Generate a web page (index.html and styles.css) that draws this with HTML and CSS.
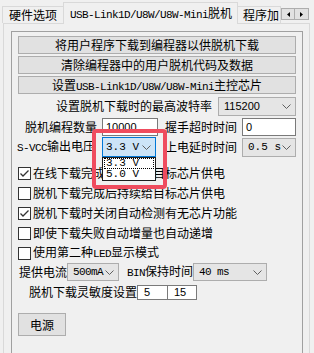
FILE: index.html
```html
<!DOCTYPE html>
<html>
<head>
<meta charset="utf-8">
<link rel="stylesheet" href="styles.css">
</head>
<body>
<div class="tabs">
  <div class="tab tab-first">硬件选项</div>
  <div class="tab tab-active"><span class="m">USB-Link1D/U8W/U8W-Mini</span>脱机</div>
  <div class="tab tab-third">程序加</div>
  <div class="arrows">
    <span class="arr"><svg width="3" height="5" viewBox="0 0 3 5"><polygon points="3,0 3,5 0,2.5" fill="#000"/></svg></span>
    <span class="arr"><svg width="3" height="5" viewBox="0 0 3 5"><polygon points="0,0 0,5 3,2.5" fill="#000"/></svg></span>
  </div>
</div>
<div class="panel">
  <div class="group">
    <div class="btn wide">将用户程序下载到编程器以供脱机下载</div>
    <div class="btn wide gap2">清除编程器中的用户脱机代码及数据</div>
    <div class="btn wide gap2">设置<span class="m">USB-Link1D/U8W/U8W-Mini</span>主控芯片</div>

    <div class="row row-baud">
      <span class="lbl w156">设置脱机下载时的最高波特率</span>
      <div class="combo c-baud"><span class="num">115200</span><svg class="chev" width="9" height="5" viewBox="0 0 9 5"><polyline points="0.5,0.5 4.5,4.5 8.5,0.5" fill="none" stroke="#5f5f5f" stroke-width="1"/></svg></div>
    </div>

    <div class="row row-count">
      <span class="lbl w72 ml7">脱机编程数量</span>
      <div class="input i-count"><span class="num">10000</span></div>
      <span class="lbl w72 ml7">握手超时时间</span>
      <div class="input i-hand"><span class="num">0</span></div>
    </div>

    <div class="row row-vcc">
      <span class="lbl w78 mln1"><span class="m">S-VCC</span>输出电压</span>
      <div class="combo c-vcc active"><span class="m sp">3.3 V</span><svg class="chev" width="9" height="5" viewBox="0 0 9 5"><polyline points="0.5,0.5 4.5,4.5 8.5,0.5" fill="none" stroke="#5f5f5f" stroke-width="1"/></svg></div>
      <span class="lbl w72 ml9">上电延时时间</span>
      <div class="combo c-delay"><span class="m sp">0.5 s</span><svg class="chev" width="9" height="5" viewBox="0 0 9 5"><polyline points="0.5,0.5 4.5,4.5 8.5,0.5" fill="none" stroke="#5f5f5f" stroke-width="1"/></svg></div>
    </div>

    <div class="checks">
      <div class="check"><span class="box"><svg width="11" height="11" viewBox="0 0 11 11"><polyline points="1.5,5.5 4,8 9.5,2.5" fill="none" stroke="#333" stroke-width="1.3"/></svg></span><span class="ctext">在线下载完成后持续给目标芯片供电</span></div>
      <div class="check"><span class="box"></span><span class="ctext">脱机下载完成后持续给目标芯片供电</span></div>
      <div class="check"><span class="box"><svg width="11" height="11" viewBox="0 0 11 11"><polyline points="1.5,5.5 4,8 9.5,2.5" fill="none" stroke="#333" stroke-width="1.3"/></svg></span><span class="ctext">脱机下载时关闭自动检测有无芯片功能</span></div>
      <div class="check"><span class="box"></span><span class="ctext">即使下载失败自动增量也自动递增</span></div>
      <div class="check"><span class="box"></span><span class="ctext">使用第二种<span class="m">LED</span>显示模式</span></div>
    </div>

    <div class="row row-cur">
      <span class="lbl w48 ml1">提供电流</span>
      <div class="combo c-cur"><span class="m">500mA</span><svg class="chev" width="9" height="5" viewBox="0 0 9 5"><polyline points="0.5,0.5 4.5,4.5 8.5,0.5" fill="none" stroke="#5f5f5f" stroke-width="1"/></svg></div>
      <span class="lbl w66 ml8"><span class="m">BIN</span>保持时间</span>
      <div class="combo c-hold"><span class="m">40 ms</span><svg class="chev" width="9" height="5" viewBox="0 0 9 5"><polyline points="0.5,0.5 4.5,4.5 8.5,0.5" fill="none" stroke="#5f5f5f" stroke-width="1"/></svg></div>
    </div>

    <div class="row row-sens">
      <span class="lbl w108 ml11">脱机下载灵敏度设置</span>
      <div class="input i-s1"><span class="num">5</span></div>
      <div class="input i-s2"><span class="num">15</span></div>
    </div>

    <div class="btn btn-power">电源</div>
  </div>
</div>

<div class="highlight"></div>
<div class="droplist">
  <div class="ditem focus"><span class="m sp">3.3 V</span></div>
  <div class="ditem"><span class="m sp">5.0 V</span></div>
</div>
</body>
</html>
```

FILE: styles.css
```css
html, body {
  margin: 0;
  padding: 0;
}
body {
  width: 314px;
  height: 353px;
  overflow: hidden;
  position: relative;
  background: #f0f0f0;
  color: #000;
  font-family: "Noto Sans CJK SC", "Noto Sans", sans-serif;
  font-size: 12px;
  line-height: 16px;
}
.m {
  font-family: "Liberation Mono", "DejaVu Sans Mono", monospace;
  font-size: 11px;
  letter-spacing: -0.6px;
}
.sp {
  letter-spacing: 0;
  font-size: 11px;
}
.num {
  font-family: "Liberation Sans", Arial, sans-serif;
  font-size: 11px;
}

/* tabs */
.tabs {
  display: flex;
  align-items: flex-end;
  height: 23px;
  padding-left: 2px;
}
.tab {
  box-sizing: border-box;
  border: 1px solid #d9d9d9;
  border-bottom: none;
  white-space: nowrap;
  overflow: hidden;
  background: #f0f0f0;
}
.tab-first {
  width: 61px;
  height: 17px;
  padding-left: 6px;
  line-height: 16px;
  border-right: none;
}
.tab-active {
  width: 175px;
  height: 22px;
  margin-bottom: -1px;
  position: relative;
  z-index: 1;
  padding-left: 6px;
  line-height: 20px;
  background: #f0f0f0;
}
.tab-third {
  width: 43px;
  height: 17px;
  padding-left: 5px;
  line-height: 16px;
  border-left: none;
}
.arrows {
  align-self: flex-start;
  margin-top: 8px;
  display: flex;
}
.arr {
  box-sizing: border-box;
  width: 14px;
  height: 12px;
  border: 1px solid #adadad;
  background: #e1e1e1;
  display: flex;
  align-items: center;
  justify-content: center;
}
.arr + .arr {
  border-left: none;
}

/* panel */
.panel {
  box-sizing: border-box;
  margin-left: 3px;
  width: 307px;
  height: 330px;
  border: 1px solid #d9d9d9;
  border-bottom: none;
  padding: 7px 0 0 7px;
}
.group {
  box-sizing: border-box;
  width: 292px;
  height: 322px;
  border: 1px solid #a0a0a0;
  border-bottom: none;
  padding: 4px 0 0 6px;
  display: flex;
  flex-direction: column;
}
.btn {
  box-sizing: border-box;
  height: 18px;
  border: 1px solid #adadad;
  background: #e1e1e1;
  text-align: center;
  line-height: 16px;
  white-space: nowrap;
}
.wide {
  width: 278px;
}
.gap2 {
  margin-top: 2px;
}

.row {
  display: flex;
  align-items: center;
  white-space: nowrap;
}
.lbl {
  display: inline-block;
  flex: none;
  white-space: nowrap;
}
.w156 { width: 156px; }
.w72 { width: 72px; }
.w78 { width: 78px; }
.w48 { width: 48px; }
.w66 { width: 66px; }
.w108 { width: 108px; }
.ml1 { margin-left: 1px; }
.ml7 { margin-left: 7px; }
.ml8 { margin-left: 8px; }
.ml9 { margin-left: 9px; }
.ml11 { margin-left: 11px; }
.mln1 { margin-left: -1px; }

.combo {
  box-sizing: border-box;
  flex: none;
  display: flex;
  align-items: center;
  justify-content: space-between;
  border: 1px solid #adadad;
  background: #e5e5e5;
  padding: 0 4px 0 5px;
}
.combo.active {
  background: #cce4f7;
  border-color: #0078d7;
  padding-left: 3px;
}
.input {
  box-sizing: border-box;
  flex: none;
  display: flex;
  align-items: center;
  border: 1px solid #7a7a7a;
  background: #fff;
  padding-left: 3px;
}

.row-baud {
  margin-top: 2px;
  height: 20px;
  padding-left: 38px;
}
.c-baud {
  margin-left: 6px;
  width: 78px;
  height: 19px;
}
.row-count {
  margin-top: 1px;
  height: 20px;
}
.i-count {
  margin-left: 5px;
  width: 56px;
  height: 18px;
}
.i-hand {
  margin-left: 5px;
  width: 54px;
  height: 18px;
}
.row-vcc {
  height: 20px;
}
.c-vcc {
  margin-left: 7px;
  width: 54px;
  height: 20px;
}
.c-delay {
  margin-left: 5px;
  width: 54px;
  height: 19px;
}

.checks {
  margin-top: 6px;
  display: flex;
  flex-direction: column;
}
.check {
  height: 20px;
  display: flex;
  align-items: center;
  white-space: nowrap;
}
.box {
  box-sizing: border-box;
  width: 13px;
  height: 13px;
  border: 1px solid #333;
  background: #fff;
  display: flex;
  align-items: center;
  justify-content: center;
  flex: none;
}
.ctext {
  margin-left: 2px;
}

.row-cur {
  height: 18px;
}
.c-cur {
  width: 52px;
  height: 18px;
}
.c-hold {
  width: 74px;
  height: 18px;
}
.row-sens {
  margin-top: 3px;
  height: 16px;
}
.i-s1 {
  width: 31px;
  height: 15px;
  padding-left: 6px;
}
.i-s2 {
  width: 30px;
  height: 15px;
  margin-left: -1px;
  padding-left: 6px;
}
.btn-power {
  margin-top: 13px;
  width: 48px;
  height: 23px;
  line-height: 21px;
}

/* overlays */
.highlight {
  position: absolute;
  left: 92px;
  top: 129px;
  width: 67px;
  height: 52px;
  border: 4px solid #ef4c5e;
  border-radius: 4px;
}
.droplist {
  position: absolute;
  left: 102px;
  top: 157px;
  box-sizing: border-box;
  width: 54px;
  height: 24px;
  border: 1px solid #1e1e1e;
  background: #fff;
  padding: 0;
}
.ditem {
  height: 11px;
  line-height: 11px;
  padding-left: 2px;
  box-sizing: border-box;
  margin: 0 1px;
  overflow: hidden;
}
.ditem .m {
  line-height: 11px;
  display: inline-block;
  vertical-align: top;
}
.ditem.focus {
  outline: 1px dotted #000;
  outline-offset: -1px;
}
```
